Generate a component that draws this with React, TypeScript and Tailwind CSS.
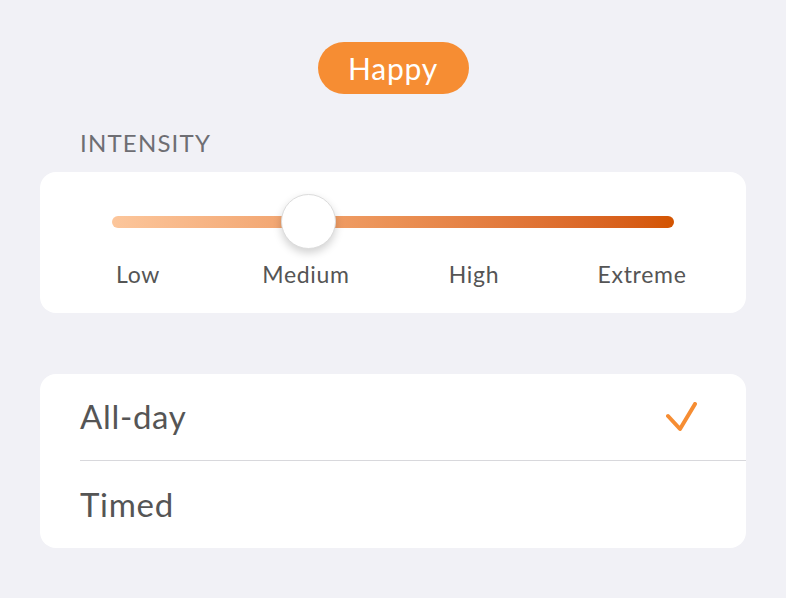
import React from "react";

export default function App() {
  const font = { fontFamily: "Lato, 'Open Sans', sans-serif" };
  return (
    <div className="w-[786px] h-[598px] bg-[#f1f1f6] overflow-hidden" style={font}>
      <div className="flex justify-center pt-[42px]">
        <div className="w-[151px] h-[52px] rounded-full bg-[#f68d33] flex items-center justify-center text-white text-[30px] leading-none tracking-[0.8px]">
          Happy
        </div>
      </div>
      <div className="pl-[80px] mt-[36px] text-[24px] leading-[26px] text-[#6e6e73] tracking-[1.2px]">INTENSITY</div>
      <div className="mx-[40px] mt-[16px] h-[141px] bg-white rounded-[16px] px-[14px] relative">
        <div className="relative h-[89px]">
          <div className="absolute left-[58px] top-[44px] w-[562px] h-[12px] rounded-full bg-gradient-to-r from-[#fcc69b] via-[#eb9155] to-[#d35400]" />
          <div className="absolute left-[227px] top-[22px] w-[55px] h-[55px] rounded-full bg-white border border-[#dcdcdc] shadow-[0_4px_8px_rgba(0,0,0,0.18)]" />
        </div>
        <div className="grid grid-cols-4 w-[672px] text-[23px] leading-[26px] text-[#555555] text-center tracking-[0.7px]">
          <div>Low</div>
          <div>Medium</div>
          <div>High</div>
          <div>Extreme</div>
        </div>
      </div>
      <div className="mx-[40px] mt-[61px] bg-white rounded-[16px] overflow-hidden">
        <div className="h-[86px] flex items-center justify-between pl-[40px] pr-[48px]">
          <span className="text-[33px] text-[#555555] tracking-[0.7px]">All-day</span>
          <svg width="32" height="31" viewBox="0 0 32 31" fill="none">
            <polyline points="2,14 14,27 29,2" stroke="#f68d33" strokeWidth="4" strokeLinecap="round" strokeLinejoin="round" />
          </svg>
        </div>
        <div className="ml-[40px] h-px bg-[#d8d8dc]" />
        <div className="h-[87px] flex items-center pl-[40px]">
          <span className="text-[33px] text-[#555555] tracking-[0.7px]">Timed</span>
        </div>
      </div>
    </div>
  );
}
